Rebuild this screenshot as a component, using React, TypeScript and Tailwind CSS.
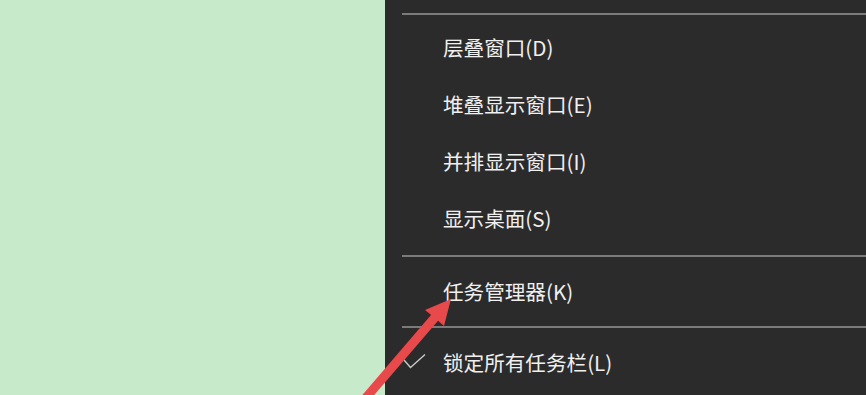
import React from "react";

const font = { fontFamily: '"Noto Sans CJK SC", "Noto Sans", sans-serif' };

function Item({ label, checked = false }: { label: string; checked?: boolean }) {
  return (
    <div className="h-[57px] flex items-center relative">
      {checked && (
        <svg className="absolute left-[17px] top-[19px]" width="26" height="18" viewBox="0 0 26 18">
          <path d="M2 7 L8.5 14.5 L23 1.5" fill="none" stroke="#c9c9c9" strokeWidth="1.4" />
        </svg>
      )}
      <span className="pl-[58px] text-[20.6px] leading-none text-[#f0f0f0]">{label}</span>
    </div>
  );
}

function Sep({ className = "" }: { className?: string }) {
  return <div className={"ml-[17px] h-[2px] bg-[#7b7b7b] " + className} />;
}

export default function App() {
  return (
    <div className="w-[866px] h-[395px] flex overflow-hidden relative" style={font}>
      <div className="w-[385px] bg-[#c7ebca]" />
      <div className="flex-1 bg-[#2b2b2b] flex flex-col">
        <div className="h-[13px]" />
        <Sep />
        <div className="h-[4px]" />
        <Item label="层叠窗口(D)" />
        <Item label="堆叠显示窗口(E)" />
        <Item label="并排显示窗口(I)" />
        <Item label="显示桌面(S)" />
        <div className="h-[8px]" />
        <Sep />
        <div className="h-[6px]" />
        <Item label="任务管理器(K)" />
        <div className="h-[6px]" />
        <Sep />
        <div className="h-[6px]" />
        <Item label="锁定所有任务栏(L)" checked />
      </div>
      <svg className="absolute left-0 top-0 pointer-events-none" width="866" height="395" viewBox="0 0 866 395">
        <line x1="364" y1="400" x2="437" y2="315" stroke="#e8494b" strokeWidth="9" />
        <polygon points="451,299 444,326 435,318 425,310" fill="#e8494b" />
      </svg>
    </div>
  );
}
